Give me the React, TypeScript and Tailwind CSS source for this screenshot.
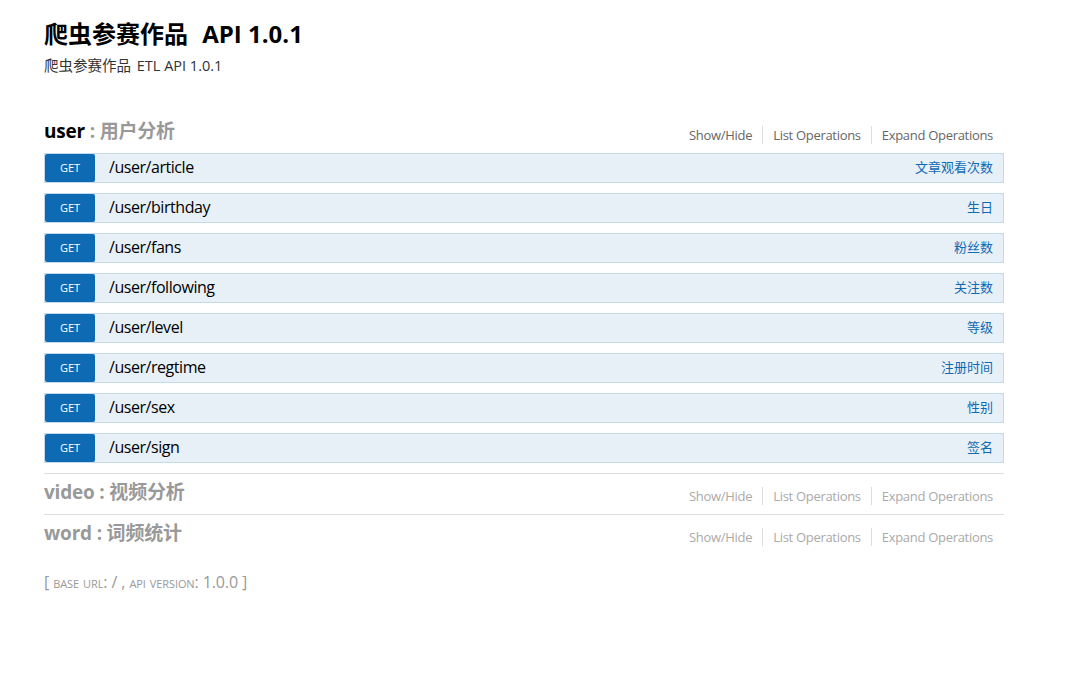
import React from "react";

type Op = { path: string; summary: string };

const userOps: Op[] = [
  { path: "/user/article", summary: "文章观看次数" },
  { path: "/user/birthday", summary: "生日" },
  { path: "/user/fans", summary: "粉丝数" },
  { path: "/user/following", summary: "关注数" },
  { path: "/user/level", summary: "等级" },
  { path: "/user/regtime", summary: "注册时间" },
  { path: "/user/sex", summary: "性别" },
  { path: "/user/sign", summary: "签名" },
];

const Options = ({ active }: { active?: boolean }) => (
  <ul
    className={`flex items-start pt-[13px] text-[13px] leading-[18px] tracking-[-0.3px] ${
      active ? "text-[#666]" : "text-[#aaa]"
    }`}
  >
    <li className="px-[10px] border-r border-[#ddd]">Show/Hide</li>
    <li className="px-[10px] border-r border-[#ddd]">List Operations</li>
    <li className="pl-[10px] pr-[11px]">Expand Operations</li>
  </ul>
);

const ResourceHeading = ({
  name,
  desc,
  active,
}: {
  name: string;
  desc: string;
  active?: boolean;
}) => (
  <div className="h-[40px] flex items-start justify-between">
    <h2 className="pt-[5px] text-[19px] leading-[26px] font-bold text-[#999] tracking-[-0.2px]">
      <span className={active ? "text-black" : ""}>{name}</span>
      <span> : {desc}</span>
    </h2>
    <Options active={active} />
  </div>
);

const Operation = ({ op }: { op: Op }) => (
  <li className="mb-[10px] h-[30px] flex items-center border border-[#c3d9ec] bg-[#e7f0f7]">
    <span className="w-[50px] h-[28px] flex items-center justify-center rounded-[2px] bg-[#0f6ab4] text-white text-[11px] pt-[1px]">
      GET
    </span>
    <span className="pl-[14px] flex-1 text-[16px] text-black pb-[2px] tracking-[-0.45px]">
      {op.path}
    </span>
    <span className="pr-[10px] text-[13px] text-[#0f6ab4] pb-[1px]">
      {op.summary}
    </span>
  </li>
);

export default function App() {
  return (
    <div
      className="min-h-screen bg-white"
      style={{ fontFamily: "'Open Sans', 'Noto Sans CJK SC', sans-serif" }}
    >
      <div className="ml-[44px] w-[960px] pt-[19px]">
        <h1 className="text-[24px] leading-[30px] font-bold text-black">
          <span className="mr-[8px]">爬虫参赛作品</span> API 1.0.1
        </h1>
        <p className="mt-[7px] text-[14.5px] leading-[20px] text-[#333]">
          <span className="mr-[2px]">爬虫参赛作品</span> ETL API 1.0.1
        </p>

        <ul className="mt-[37px]">
          <li className="border-b border-[#ddd]">
            <ResourceHeading name="user" desc="用户分析" active />
            <ul>
              {userOps.map((op) => (
                <Operation key={op.path} op={op} />
              ))}
            </ul>
          </li>
          <li className="border-b border-[#ddd]">
            <ResourceHeading name="video" desc="视频分析" />
          </li>
          <li>
            <ResourceHeading name="word" desc="词频统计" />
          </li>
        </ul>

        <h4 className="mt-[16px] text-[16px] leading-[22px] text-[#999] tracking-[-0.1px]">
          [ <span className="[font-variant:small-caps]">base url</span>: / ,{" "}
          <span className="[font-variant:small-caps]">api version</span>: 1.0.0 ]
        </h4>
      </div>
    </div>
  );
}
